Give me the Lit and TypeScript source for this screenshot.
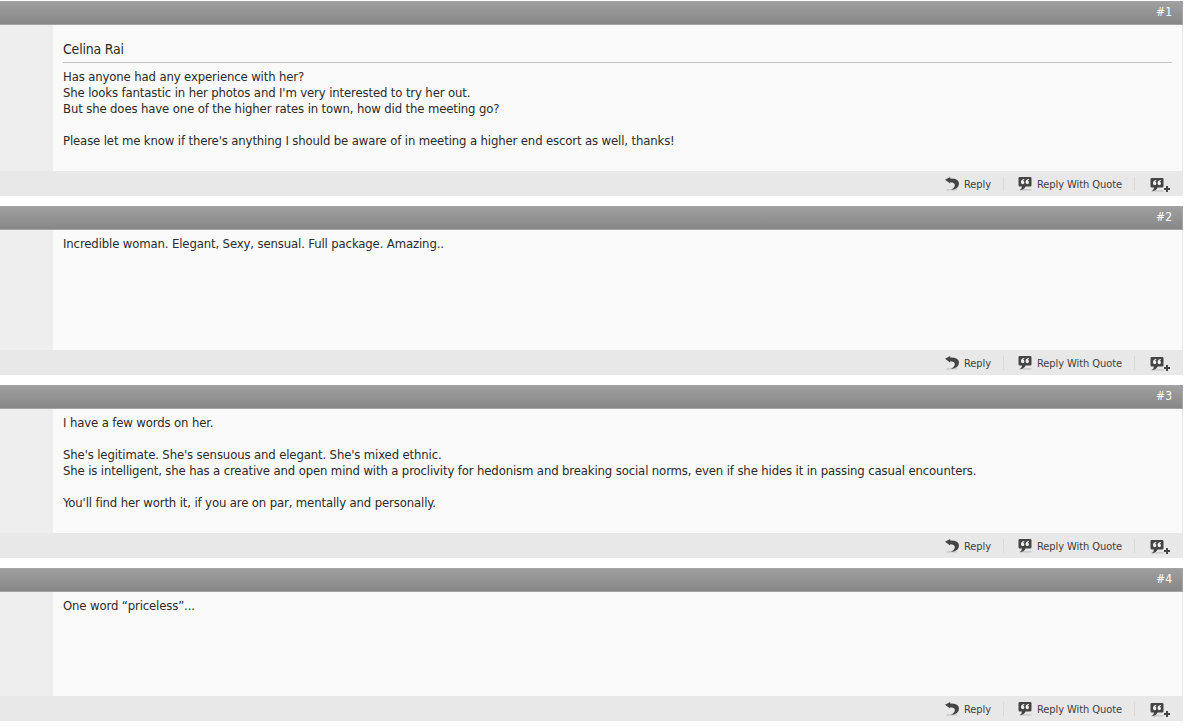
import { css, html, LitElement, nothing, svg } from 'lit';
import { customElement, property } from 'lit/decorators.js';

interface Post {
    id: number;
    title?: string;
    lines: string[];
    height: number;
}

const POSTS: Post[] = [
    {
        id: 1,
        title: 'Celina Rai',
        height: 146,
        lines: [
            'Has anyone had any experience with her?',
            "She looks fantastic in her photos and I'm very interested to try her out.",
            'But she does have one of the higher rates in town, how did the meeting go?',
            '',
            "Please let me know if there's anything I should be aware of in meeting a higher end escort as well, thanks!",
        ],
    },
    {
        id: 2,
        height: 120,
        lines: ['Incredible woman. Elegant, Sexy, sensual. Full package. Amazing..'],
    },
    {
        id: 3,
        height: 124,
        lines: [
            'I have a few words on her.',
            '',
            "She's legitimate. She's sensuous and elegant. She's mixed ethnic.",
            'She is intelligent, she has a creative and open mind with a proclivity for hedonism and breaking social norms, even if she hides it in passing casual encounters.',
            '',
            "You'll find her worth it, if you are on par, mentally and personally.",
        ],
    },
    {
        id: 4,
        height: 104,
        lines: ['One word “priceless”...'],
    },
];

const bubble = svg`
    <path d="M2 12.2h11.5v1.2H1z" fill="#c4c4c4"/>
    <path d="M1.8 0h10.4Q13.5 0 13.5 1.3V8Q13.5 9.6 12.2 9.6H7.6Q6.6 12.6 1.8 13.2Q4 11.6 4 9.6H1.8Q.5 9.6 .5 8V1.3Q.5 0 1.8 0z" fill="#444"/>
    <path d="M6.3 2.1Q3 2.3 3 5.2A1.7 1.7 0 1 0 5.1 3.8Q5.4 3.1 6.3 3zM10.9 2.1Q7.6 2.3 7.6 5.2A1.7 1.7 0 1 0 9.7 3.8Q10 3.1 10.9 3z" fill="#f2f2f2"/>
`;

@customElement('forum-post')
export class ForumPost extends LitElement {

    @property({ attribute: false })
    post!: Post;

    static styles = css`
            :host {
                display: block;
            }
            .head {
                box-sizing: border-box;
                height: 24px;
                padding-right: 10px;
                border: 1px solid #a4a4a4;
                border-left: 0;
                background: linear-gradient(#9f9f9f, #878787);
                color: #fff;
                font: 12px/20px "DejaVu Sans Condensed", Tahoma, sans-serif;
                text-align: right;
            }
            .body {
                display: flex;
                box-sizing: border-box;
                border-right: 1px solid #e8e8e8;
                background: #fafafa;
            }
            .user {
                flex: 0 0 53px;
                background: #eee;
            }
            .content {
                flex: 1;
                padding: 6px 10px 0;
                color: #2a2a2a;
                font: 13px/16px "DejaVu Sans Condensed", Tahoma, sans-serif;
                letter-spacing: -0.135px;
            }
            .title {
                margin: 8px 0 6px;
                padding-bottom: 2px;
                border-bottom: 1px solid #c4c4c4;
                font-size: 14px;
                line-height: 21px;
                letter-spacing: -0.2px;
            }
            .line {
                min-height: 16px;
                white-space: nowrap;
            }
            .foot {
                display: flex;
                justify-content: flex-end;
                box-sizing: border-box;
                height: 25px;
                padding: 6px 12px 5px 0;
                background: #e8e8e8;
                color: #3e3e3e;
                font: 11px/15px "DejaVu Sans Condensed", Tahoma, sans-serif;
                letter-spacing: -0.07px;
            }
            .action {
                display: flex;
                white-space: nowrap;
            }
            .action svg {
                display: block;
                flex: none;
                margin-right: 5px;
            }
            .action + .action {
                margin-left: 12px;
                padding-left: 14px;
                border-left: 1px solid #d9d9d9;
            }
            .reply {
                width: 46px;
            }
            .quote {
                width: 104px;
            }
            .action.multi svg {
                margin: 1px 0 0 1px;
            }
            .action.multi {
                width: 22px;
            }
        `;

    render() {
        const { id, title, lines, height } = this.post;
        return html`
          <div class="head">#${id}</div>
          <div class="body" style="height: ${height}px">
            <div class="user"></div>
            <div class="content">
                ${title ? html`<div class="title">${title}</div>` : nothing}
                ${lines.map(line => html`<div class="line"><span>${line}</span></div>`)}
            </div>
          </div>
          <div class="foot">
            <div class="action reply">
                <svg width="14" height="14" viewBox="0 0 14 14">
                    <path d="M2 12.2h10v1.2H1z" fill="#c4c4c4"/>
                    <path d="M0 2.8L5.2 0V1.4Q13.8 1.2 14 6.5Q14 12 5.8 13.1Q10 10.6 9.8 7.7Q9.4 5.3 5.2 5.2V6.6z" fill="#444"/>
                </svg>
                <span>Reply</span>
            </div>
            <div class="action quote">
                <svg width="14" height="14" viewBox="0 0 14 14">${bubble}</svg>
                <span>Reply With Quote</span>
            </div>
            <div class="action multi">
                <svg width="20" height="14" viewBox="0 0 20 14">
                    ${bubble}
                    <path d="M16 8h2v2h2v2h-2v2h-2v-2h-2v-2h2z" fill="#444"/>
                </svg>
            </div>
          </div>`;
    }
}

@customElement('app-root')
export class AppRoot extends LitElement {

    static styles = css`
            :host {
                display: block;
                height: 728px;
                background: #fff;
                overflow: hidden;
            }
            .posts {
                display: flex;
                flex-direction: column;
                gap: 10px;
                width: 1183px;
                padding-top: 1px;
            }
        `;

    render() {
        return html`
          <div class="posts">
            ${POSTS.map(post => html`<forum-post .post="${post}"></forum-post>`)}
          </div>`;
    }
}
